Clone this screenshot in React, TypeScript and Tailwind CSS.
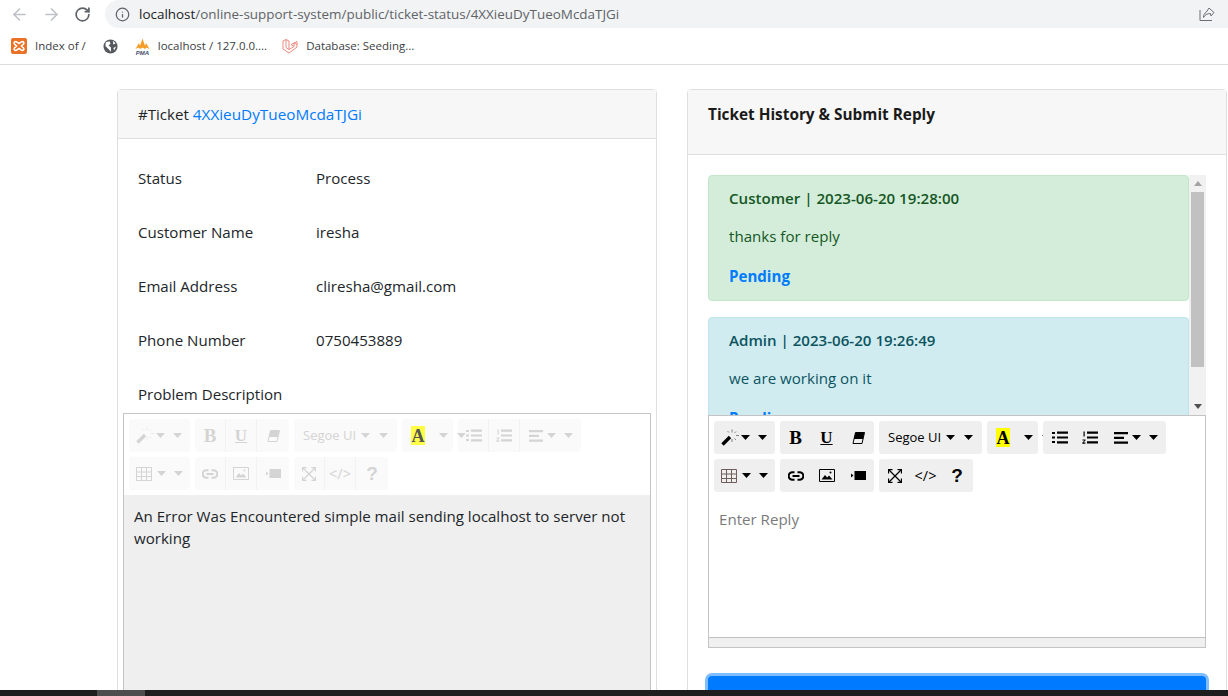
import React from "react";
import { ArrowLeft, ArrowRight, RotateCw, Info } from "lucide-react";

const Caret = () => (
  <svg width="9" height="5" viewBox="0 0 9 5" className="shrink-0"><path d="M0 0h9L4.500 5z" fill="currentColor" /></svg>
);

const Wand = () => (
  <svg width="18" height="17" viewBox="0 0 18 17" fill="none" className="shrink-0">
    <path d="M1.500 15.500 9 8" stroke="currentColor" strokeWidth="3.400" />
    <path d="M11 0.500v3M11 10v3M15 6.500h3M6.500 2l1.500 1.500M15 2.500l-1.500 1.500M15 11l-1.500-1.500" stroke="currentColor" strokeOpacity="0.45" strokeWidth="1" />
  </svg>
);
const Eraser = () => (
  <svg width="13" height="12" viewBox="0 0 13 12" className="shrink-0">
    <path d="M3.500.5h9l-2.500 11H1z" fill="none" stroke="currentColor" />
    <path d="M3.500.5h9L11 7H2z" fill="currentColor" />
  </svg>
);
const Bullets = () => (
  <svg width="16" height="13" viewBox="0 0 16 13" className="shrink-0" fill="currentColor">
    <path d="M0 1h3v2H0zM0 5.500h3v2H0zM0 10h3v2H0zM5 .5h11v2.200H5zM5 5.400h11v2.200H5zM5 10.300h11v2.200H5z" />
  </svg>
);
const Numbers = () => (
  <svg width="16" height="14" viewBox="0 0 16 14" className="shrink-0" fill="currentColor">
    <path d="M1.500.500h1.200v5H1.500zM.5 8.500h3v1l-2 2h2v1.200H.3v-1l2.100-2.200H.5zM5 .5h11v2.200H5zM5 5.400h11v2.200H5zM5 10.300h11v2.200H5z" />
  </svg>
);
const AlignI = () => (
  <svg width="14" height="12" viewBox="0 0 14 12" className="shrink-0" fill="currentColor">
    <path d="M0 0h14v2.200H0zM0 4.800h10v2.200H0zM0 9.600h14v2.200H0z" />
  </svg>
);
const TableI = ({ off }: { off: boolean }) => (
  <svg width="16" height="14" viewBox="0 0 16 14" fill="none" stroke={off ? "currentColor" : "#6f5f58"} className="shrink-0">
    <path d="M.5.500h15v13H.5zM.5 5h15M.5 9.500h15M5.500.5v13M10.500.5v13" />
  </svg>
);
const LinkI = () => (
  <svg width="16" height="10" viewBox="0 0 16 10" fill="none" stroke="currentColor" strokeWidth="2" className="shrink-0">
    <path d="M6.500 1.200H4.500a3.800 3.800 0 0 0 0 7.600h2M9.500 1.200h2a3.800 3.800 0 0 1 0 7.600h-2M4.500 5h7" />
  </svg>
);
const PictureI = () => (
  <svg width="16" height="13" viewBox="0 0 16 13" className="shrink-0">
    <path d="M.5.500h15v12H.5z" fill="none" stroke="currentColor" />
    <path d="M2.500 10.500 6 6l2.200 2.500L10 6.500l3.500 4z" fill="currentColor" />
    <circle cx="11.500" cy="3.500" r="1" fill="currentColor" />
  </svg>
);
const VideoI = () => (
  <svg width="15" height="9" viewBox="0 0 15 9" className="shrink-0" fill="currentColor">
    <path d="M0 2.500 2.500 4.500 0 6.500zM3.500 0H15v9H3.500z" />
  </svg>
);
const Expand = () => (
  <svg width="14" height="14" viewBox="0 0 14 14" className="shrink-0" fill="none" stroke="currentColor" strokeWidth="1.300">
    <path d="M1 1l12 12M13 1 1 13" />
    <path d="M.5 4.500v-4h4M9.500.5h4v4M13.500 9.500v4h-4M4.500 13.500h-4v-4" />
  </svg>
);

function Btn({ w, off, children, divide }: { w: string; off: boolean; children: React.ReactNode; divide?: boolean }) {
  return (
    <div className={`${w} h-full flex items-center justify-center gap-[5px] ${divide && off ? "border-r border-[#f2f2f2]" : ""}`}>
      {children}
    </div>
  );
}

function Group({ off, children, w }: { off: boolean; w: string; children: React.ReactNode }) {
  return (
    <div className={`${w} h-[33px] rounded-[3px] flex items-center relative ${off ? "bg-[#fafafa] text-[#d4d4d4]" : "bg-[#efefef] text-black"}`}>
      {children}
    </div>
  );
}

function Toolbar({ off }: { off: boolean }) {
  const serif = "font-['Liberation_Serif',serif] font-bold";
  return (
    <div className="flex flex-col gap-[5px] px-[5px] pt-[5px] pb-[5px]">
      <div className="flex gap-[5px]">
        <Group off={off} w="w-[61px]">
          <div className="flex items-center gap-[2px] pl-[7px]"><Wand /><Caret /></div>
          <div className="ml-[8px]"><Caret /></div>
        </Group>
        <Group off={off} w="w-[94px]">
          <Btn w="w-[31px]" off={off} divide><span className={`${serif} text-[19px] leading-none`}>B</span></Btn>
          <Btn w="w-[31px]" off={off} divide><span className={`${serif} text-[17px] leading-none underline`}>U</span></Btn>
          <Btn w="w-[32px]" off={off}><Eraser /></Btn>
        </Group>
        <Group off={off} w="w-[103px]">
          <span className="pl-[9px] text-[13px] whitespace-nowrap">Segoe UI</span>
          <div className="ml-[5px]"><Caret /></div>
          <div className="ml-[9px]"><Caret /></div>
        </Group>
        <Group off={off} w="w-[51px]">
          <div className={`ml-[9px] w-[14px] h-[19px] flex items-center justify-center ${off ? "bg-[#ffff44] text-[#555]" : "bg-[#ffff00] text-black"}`}>
            <span className={`${serif} text-[18px] leading-none`}>A</span>
          </div>
          <div className="ml-[14px]"><Caret /></div>
          <div className={`absolute left-[55px] top-[14px] z-10 overflow-hidden ${off ? "w-[8px]" : "w-[1px]"}`}><Caret /></div>
        </Group>
        <Group off={off} w="w-[123px]">
          <Btn w="w-[31px]" off={off} divide><div className="ml-[2px] flex"><Bullets /></div></Btn>
          <Btn w="w-[31px]" off={off} divide><Numbers /></Btn>
          <div className="flex items-center pl-[9px] gap-[4px]"><AlignI /><Caret /></div>
          <div className="ml-[8px]"><Caret /></div>
        </Group>
      </div>
      <div className="flex gap-[5px]">
        <Group off={off} w="w-[61px]">
          <div className="flex items-center gap-[5px] pl-[7px]"><TableI off={off} /><Caret /></div>
          <div className="ml-[8px]"><Caret /></div>
        </Group>
        <Group off={off} w="w-[94px]">
          <Btn w="w-[31px]" off={off} divide><LinkI /></Btn>
          <Btn w="w-[31px]" off={off} divide><PictureI /></Btn>
          <Btn w="w-[32px]" off={off}><VideoI /></Btn>
        </Group>
        <Group off={off} w="w-[94px]">
          <Btn w="w-[31px]" off={off} divide><Expand /></Btn>
          <Btn w="w-[31px]" off={off} divide><span className="text-[14.500px]">&lt;/&gt;</span></Btn>
          <Btn w="w-[32px]" off={off}><span className="text-[19px] font-bold leading-none font-['Liberation_Sans',sans-serif]">?</span></Btn>
        </Group>
      </div>
    </div>
  );
}

const Row = ({ label, value, h = "h-[54px]" }: { label: string; value?: string; h?: string }) => (
  <div className={`${h} flex items-start px-[20px] pt-[15px] leading-[24px]`}>
    <div className="w-[178px] shrink-0">{label}</div>
    {value && <div>{value}</div>}
  </div>
);

const Message = ({ tone, title, body }: { tone: "green" | "blue"; title: string; body: string }) => (
  <div className={`border rounded-[4px] px-[20px] pt-[10px] pb-[12px] leading-[24px] ${tone === "green" ? "bg-[#d4edda] border-[#c3e6cb] text-[#155724]" : "bg-[#d1ecf1] border-[#bee5eb] text-[#0c5460]"}`}>
    <div className="font-semibold">{title}</div>
    <div className="mt-[14px]">{body}</div>
    <div className="mt-[16px] font-bold text-[#007bff]">Pending</div>
  </div>
);

export default function App() {
  return (
    <div className="w-[1228px] h-[696px] overflow-hidden flex flex-col bg-white text-[#212529] font-['Open_Sans',sans-serif] text-[15.100px]">
      {/* browser chrome */}
      <div className="h-[28px] flex items-center shrink-0">
        <div className="w-[105px] flex items-center pl-[10px] gap-[13px] shrink-0">
          <ArrowLeft size={19} className="text-[#bdc1c6]" />
          <ArrowRight size={19} className="text-[#bdc1c6]" />
          <RotateCw size={17} className="text-[#5f6368]" strokeWidth={2.4} />
        </div>
        <div className="flex-1 h-[28px] bg-[#f1f3f4] rounded-l-[14px] flex items-center pl-[10px] pr-[13px]">
          <Info size={15} className="text-[#5f6368]" />
          <div className="ml-[9px] text-[13.450px] text-[#5f6368] whitespace-nowrap"><span className="text-[#202124]">localhost</span>/online-support-system/public/ticket-status/4XXieuDyTueoMcdaTJGi</div>
          <svg width="16" height="15" viewBox="0 0 16 15" fill="none" stroke="#6b6f73" className="ml-auto">
            <path d="M1 3v10.500h12" />
            <path d="M7 5.500 10 1l5 4.500-3 3.500-.5-2.500C8 6.500 6 8 4.500 10.500 4.500 8 5.500 6 7 5.500z" />
          </svg>
        </div>
      </div>
      <div className="h-[37px] shrink-0 border-b border-[#dadce0] flex items-center pl-[11px] text-[11.500px] text-[#3c4043] whitespace-nowrap">
        <svg width="16" height="16" viewBox="0 0 16 16" className="shrink-0">
          <rect width="16" height="16" rx="2" fill="#ea7126" />
          <path d="M4.500 3.500a1.500 1.500 0 0 0-1 2.500L5.500 8l-2 2a1.500 1.500 0 0 0 1 2.500c1 0 2.500-1.500 3.500-2 1 .5 2.500 2 3.500 2a1.500 1.500 0 0 0 1-2.500l-2-2 2-2a1.500 1.500 0 0 0-1-2.500c-1 0-2.500 1.500-3.500 2-1-.5-2.500-2-3.500-2z" fill="none" stroke="#fff" strokeWidth="1.600" />
        </svg>
        <span className="ml-[8px]">Index of /</span>
        <svg width="15" height="15" viewBox="0 0 16 16" className="ml-[17px] shrink-0">
          <circle cx="8" cy="8" r="7.500" fill="#55585c" />
          <path d="M3 3.500 7 2.500l1 2.500-2 2 2.500 2v4.500L6 11 2.500 7.500zM10.500 1.800l3 3-2.500 1zM11 9.500l3-1.500-2 4z" fill="#fff" />
        </svg>
        <svg width="17" height="17" viewBox="0 0 17 17" className="ml-[16px] shrink-0">
          <path d="M1.500 11 5 5l1 3 2.500-7.500L11 8l1-3 3.500 6-3-1.500L11 11 8.500 9.500 6 11 4.500 9.500z" fill="#f59a23" />
          <text x="8.500" y="16.500" textAnchor="middle" fontSize="6" fontWeight="700" fontStyle="italic" fill="#44506e" fontFamily="Liberation Sans, sans-serif">PMA</text>
        </svg>
        <span className="ml-[7px]">localhost / 127.0.0....</span>
        <svg width="16" height="17" viewBox="0 0 16 17" fill="none" stroke="#ef8a80" className="ml-[15px] shrink-0">
          <path d="M1 3 4 1.500 7 3v8.500l5-3V5l3-1.500V9l-8 6-6-4zM7 11.500 4 9.500V1.500M12 8.500 9 6.500 12 5l3 1.500" />
        </svg>
        <span className="ml-[8px]">Database: Seeding...</span>
      </div>

      {/* page */}
      <div className="flex-1 min-h-0 overflow-hidden flex items-start gap-[30px] pl-[117px] pt-[24px]">
        <div className="w-[540px] shrink-0 border border-[#dfdfdf] rounded-t-[4px]">
          <div className="h-[49px] bg-[#f7f7f7] border-b border-[#dfdfdf] flex items-center px-[20px] pt-[1px]">
            <span>#Ticket&nbsp;</span><span className="text-[#007bff] text-[15.300px]">4XXieuDyTueoMcdaTJGi</span>
          </div>
          <div className="pt-[12px] pb-[12px]">
            <Row label="Status" value="Process" />
            <Row label="Customer Name" value="iresha" />
            <Row label="Email Address" value="cliresha@gmail.com" />
            <Row label="Phone Number" value="0750453889" />
            <Row label="Problem Description" h="h-[46px]" />
            <div className="mx-[5px] border border-[#c4c4c4] flex flex-col">
              <Toolbar off />
              <div className="h-[300px] bg-[#efefef] px-[10px] py-[10px] leading-[22px]">
                An Error Was Encountered simple mail sending localhost to server not working
              </div>
            </div>
          </div>
        </div>

        <div className="w-[540px] shrink-0 border border-[#dfdfdf] rounded-t-[4px]">
          <div className="h-[65px] bg-[#f7f7f7] border-b border-[#dfdfdf] px-[20px] pt-[12px] leading-[24px] font-bold text-[#1a1a1a] text-[15.350px]">
            Ticket History &amp; Submit Reply
          </div>
          <div className="px-[20px] pt-[20px]">
            <div className="h-[240px] flex overflow-hidden">
              <div className="flex-1 min-w-0 flex flex-col gap-[16px]">
                <Message tone="green" title="Customer | 2023-06-20 19:28:00" body="thanks for reply" />
                <Message tone="blue" title="Admin | 2023-06-20 19:26:49" body="we are working on it" />
              </div>
              <div className="w-[17px] shrink-0 bg-[#f1f1f1] flex flex-col items-center">
                <div className="h-[17px] flex items-center justify-center text-[#a3a3a3]">
                  <svg width="8" height="5" viewBox="0 0 8 5"><path d="M4 0l4 5H0z" fill="currentColor" /></svg>
                </div>
                <div className="w-[13px] h-[175px] bg-[#c1c1c1]" />
                <div className="flex-1" />
                <div className="h-[17px] flex items-center justify-center text-[#505050]">
                  <svg width="8" height="5" viewBox="0 0 8 5"><path d="M0 0h8L4 5z" fill="currentColor" /></svg>
                </div>
              </div>
            </div>
            <div className="border border-[#c4c4c4] flex flex-col">
              <Toolbar off={false} />
              <div className="h-[140px] px-[10px] pt-[10px] leading-[24px] text-[#7a7a7a]">Enter Reply</div>
              <div className="h-[10px] bg-[#f0f0f0] border-t border-[#c0c0c0]" />
            </div>
            <div className="mt-[28px] h-[40px] rounded-[4px] bg-[#007bff] ring-[3px] ring-[#80bdff]" />
          </div>
        </div>
      </div>

      <div className="h-[6px] shrink-0 bg-[#1e1e1e] pl-[97px]">
        <div className="w-[48px] h-full bg-[#4d4d4d]" />
      </div>
    </div>
  );
}
